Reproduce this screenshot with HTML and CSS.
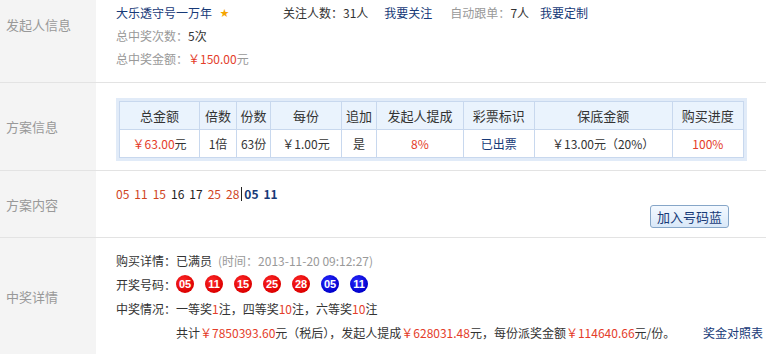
FILE: index.html
```html
<!DOCTYPE html>
<html lang="zh-CN">

<head>
    <meta charset="UTF-8">
    <title>方案详情</title>
    <link rel="stylesheet" href="styles.css">
</head>

<body>
    <div class="detail">
        <div class="row row-starter">
            <div class="label label-top">发起人信息</div>
            <div class="content">
                <p class="line">
                    <span class="starter-name"><a class="link" href="#">大乐透守号一万年</a><span class="star">★</span></span>
                    <span class="follow">关注人数：<em class="dark">31人</em></span>
                    <a class="link follow-link" href="#">我要关注</a>
                    <span class="auto">自动跟单：<em class="dark">7人</em></span>
                    <a class="link" href="#">我要定制</a>
                </p>
                <p class="line">总中奖次数：<em class="dark">5次</em></p>
                <p class="line">总中奖金额：<em class="red">￥150.00</em>元</p>
            </div>
        </div>

        <div class="row row-plan">
            <div class="label">方案信息</div>
            <div class="content">
                <div class="plan-box">
                    <table class="plan-table">
                        <thead>
                            <tr>
                                <th class="c1">总金额</th>
                                <th class="c2">倍数</th>
                                <th class="c3">份数</th>
                                <th class="c4">每份</th>
                                <th class="c5">追加</th>
                                <th class="c6">发起人提成</th>
                                <th class="c7">彩票标识</th>
                                <th class="c8">保底金额</th>
                                <th class="c9">购买进度</th>
                            </tr>
                        </thead>
                        <tbody>
                            <tr>
                                <td><em class="red">￥63.00</em>元</td>
                                <td>1倍</td>
                                <td>63份</td>
                                <td>￥1.00元</td>
                                <td>是</td>
                                <td class="red">8%</td>
                                <td class="blue">已出票</td>
                                <td>￥13.00元（20%）</td>
                                <td class="red">100%</td>
                            </tr>
                        </tbody>
                    </table>
                </div>
            </div>
        </div>

        <div class="row row-numbers">
            <div class="label">方案内容</div>
            <div class="content numbers-content">
                <p class="numbers">
                    <span class="n-red">05</span>
                    <span class="n-red">11</span>
                    <span class="n-red">15</span>
                    <span class="n-dark">16</span>
                    <span class="n-dark">17</span>
                    <span class="n-red">25</span>
                    <span class="n-red last">28</span><span class="sep"></span><span class="n-blue">05</span>
                    <span class="n-blue">11</span>
                </p>
                <div class="basket-bar">
                    <button class="basket-btn">加入号码蓝</button>
                </div>
            </div>
        </div>

        <div class="row row-prize">
            <div class="label">中奖详情</div>
            <div class="content">
                <p class="pline"><span class="dark">购买详情：</span><span class="dark">已满员</span> <span class="time">(时间：2013-11-20 09:12:27)</span></p>
                <p class="pline balls">
                    <span class="dark">开奖号码：</span>
                    <span class="ball">05</span>
                    <span class="ball">11</span>
                    <span class="ball">15</span>
                    <span class="ball">25</span>
                    <span class="ball">28</span>
                    <span class="ball ball-blue">05</span>
                    <span class="ball ball-blue">11</span>
                </p>
                <p class="pline dark">中奖情况：一等奖<em class="red">1</em>注，四等奖<em class="red">10</em>注，六等奖<em class="red">10</em>注</p>
                <p class="pline total">
                    <span class="dark">共计<em class="red">￥7850393.60</em>元（税后），发起人提成<em class="red">￥628031.48</em>元，每份派奖金额<em class="red">￥114640.66</em>元/份。</span>
                    <a class="link" href="#">奖金对照表</a>
                </p>
            </div>
        </div>
    </div>
</body>

</html>
```

FILE: styles.css
```css
body {
    margin: 0;
    padding: 0;
    background: #fff;
    font-family: "Noto Sans CJK SC", "Liberation Sans", sans-serif;
    font-size: 12px;
    color: #999;
}

p {
    margin: 0;
}

em {
    font-style: normal;
}

a {
    text-decoration: none;
}

.link {
    color: #173a78;
}

.dark {
    color: #333;
}

.red {
    color: #e43d2a;
}

.blue {
    color: #173a78;
}

.row {
    display: flex;
    border-bottom: 1px solid #e3e3e3;
}

.label {
    width: 96px;
    flex-shrink: 0;
    background: #f4f4f4;
    color: #999;
    font-size: 13px;
    display: flex;
    align-items: center;
    padding-left: 6px;
    box-sizing: border-box;
}

.label-top {
    align-items: flex-start;
    padding-top: 15px;
}

.content {
    flex: 1;
    padding-left: 20px;
}

/* 发起人信息 */
.row-starter {
    height: 82px;
}

.row-starter .content {
    padding-top: 1px;
}

.line {
    display: flex;
    align-items: center;
    height: 23px;
}

.starter-name {
    width: 167px;
    display: flex;
    align-items: center;
}

.star {
    color: #f5a400;
    font-size: 9px;
    margin-left: 8px;
}

.follow {
    color: #333;
}

.follow-link {
    margin-left: 16px;
    margin-right: 18px;
}

.auto {
    margin-right: 11px;
}

/* 方案信息 */
.row-plan {
    height: 87px;
}

.plan-box {
    margin-top: 15px;
    width: 631px;
    padding: 3px;
    box-sizing: border-box;
    background: #e1ebf8;
}

.plan-table {
    width: 100%;
    border-collapse: collapse;
    background: #fff;
    color: #333;
    text-align: center;
}

.plan-table th,
.plan-table td {
    border: 1px solid #c8d8ee;
    height: 27px;
    padding: 0;
    font-weight: normal;
}

.plan-table th {
    background: #eaf3fd;
    font-size: 13px;
}

.c1 { width: 80px; }
.c2 { width: 36px; }
.c3 { width: 34px; }
.c4 { width: 70px; }
.c5 { width: 35px; }
.c6 { width: 87px; }
.c7 { width: 71px; }
.c8 { width: 139px; }
.c9 { width: 71px; }

/* 方案内容 */
.row-numbers {
    height: 66px;
}

.numbers-content {
    display: flex;
    flex-direction: column;
    justify-content: space-between;
    padding-right: 37px;
}

.numbers {
    margin-top: 14px;
    display: flex;
    align-items: center;
    font-size: 12px;
}

.numbers span {
    margin-right: 5px;
}

.numbers .last {
    margin-right: 2px;
}

.n-red {
    color: #d0451f;
}

.n-dark {
    color: #222;
}

.n-blue {
    color: #173a78;
    font-weight: bold;
}

.numbers .sep {
    width: 1px;
    height: 14px;
    background: #222;
    margin-right: 2px;
}

.basket-bar {
    display: flex;
    justify-content: flex-end;
    margin-bottom: 9px;
}

.basket-btn {
    height: 23px;
    padding: 0 6px;
    border: 1px solid #86a6c8;
    border-radius: 3px;
    background: linear-gradient(#f4f9ff 0%, #d9e8f8 100%);
    color: #173a78;
    font-family: inherit;
    font-size: 13px;
}

/* 中奖详情 */
.row-prize {
    height: 116px;
    border-bottom: none;
}

.row-prize .content {
    padding-top: 10px;
    padding-right: 3px;
}

.pline {
    display: flex;
    align-items: center;
    height: 24px;
    color: #333;
}

.time {
    color: #999;
    margin-left: 6px;
}

.ball {
    width: 18px;
    height: 18px;
    border-radius: 50%;
    background: radial-gradient(circle at 40% 35%, #ff2a2a 0%, #dd0000 70%);
    color: #fff;
    font-family: "Liberation Sans", sans-serif;
    font-weight: bold;
    font-size: 11px;
    display: flex;
    align-items: center;
    justify-content: center;
    margin-right: 11px;
}

.ball-blue {
    background: radial-gradient(circle at 40% 35%, #2a2aff 0%, #0000cc 70%);
}

.total {
    justify-content: space-between;
    padding-left: 60px;
}
```
